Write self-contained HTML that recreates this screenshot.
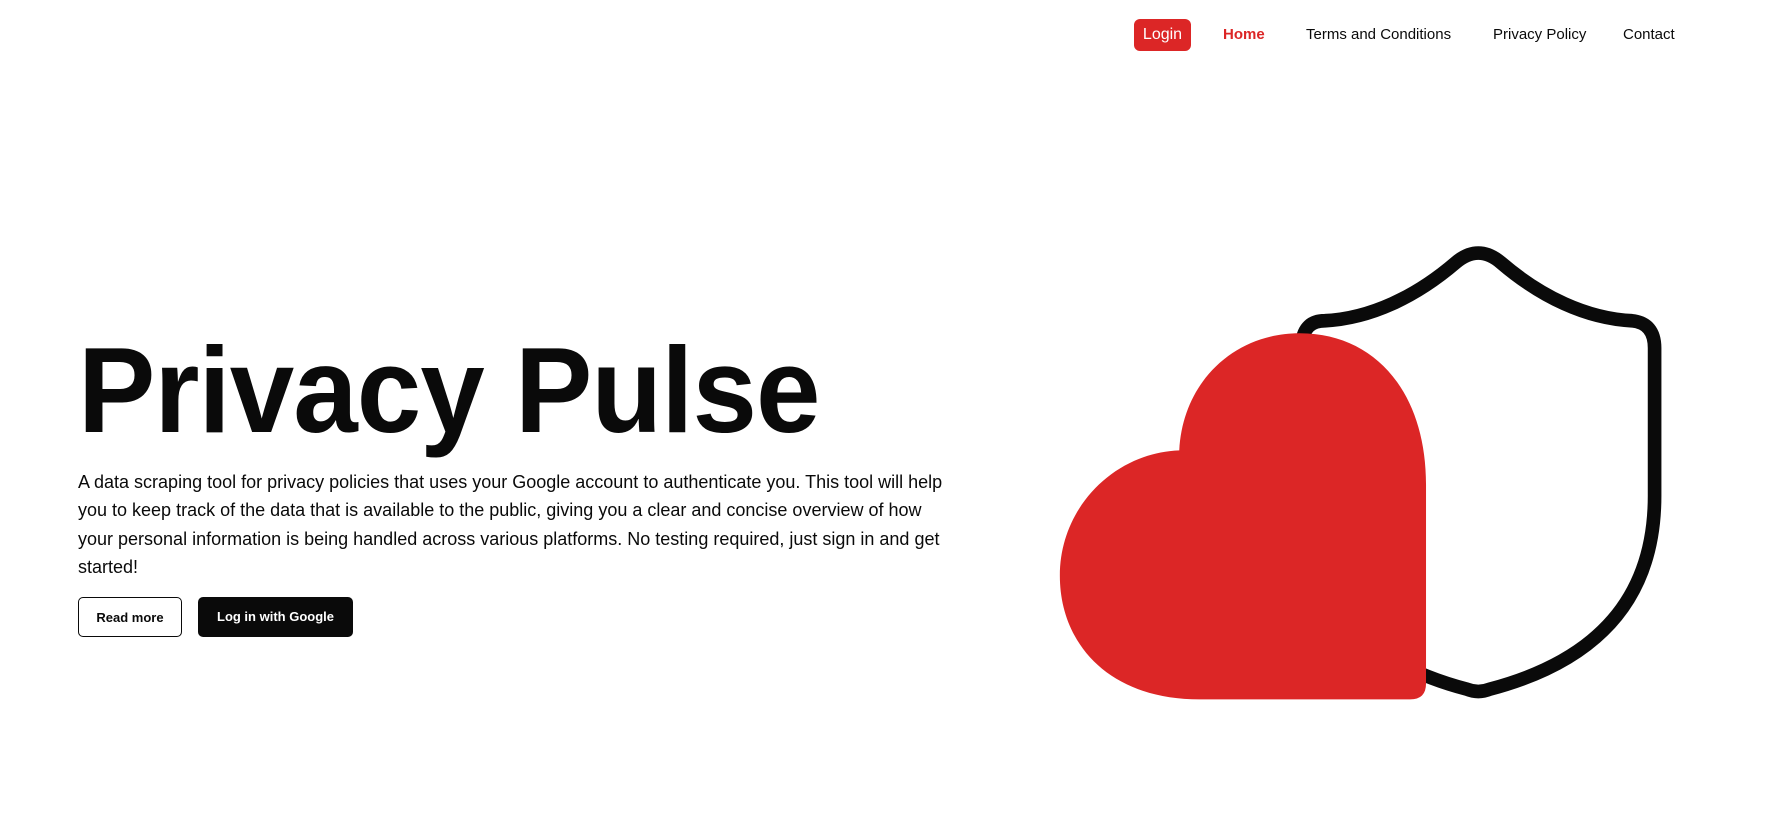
<!DOCTYPE html>
<html><head><meta charset="utf-8"><style>
body{margin:0;width:1774px;height:828px;background:#fff;position:relative;overflow:hidden;font-family:"Liberation Sans",sans-serif;color:#0a0a0a}
.nav{position:absolute;top:19px;font-size:15px;line-height:32px}
.login{position:absolute;left:1134px;top:19px;width:57px;height:32px;background:#dc2626;color:#fff;border-radius:6px;text-align:center;line-height:32px;font-size:16px}
h1{position:absolute;left:78px;top:320px;margin:0;font-size:122px;font-weight:bold;letter-spacing:-1px;line-height:140px;white-space:nowrap;transform:scaleX(0.95);transform-origin:0 0}
p{position:absolute;left:78px;top:468px;margin:0;font-size:18px;line-height:28.4px;white-space:nowrap}
.btn{position:absolute;top:597px;height:40px;border-radius:5px;font-size:13px;font-weight:bold;line-height:40px;text-align:center;box-sizing:border-box}
svg{position:absolute;left:0;top:0}
</style></head><body>
<div class="login">Login</div>
<div class="nav" style="left:1223px;color:#dc2626;font-weight:bold">Home</div>
<div class="nav" style="left:1306px">Terms and Conditions</div>
<div class="nav" style="left:1493px">Privacy Policy</div>
<div class="nav" style="left:1623px">Contact</div>
<h1>Privacy Pulse</h1>
<p>A data scraping tool for privacy policies that uses your Google account to authenticate you. This tool will help<br>you to keep track of the data that is available to the public, giving you a clear and concise overview of how<br>your personal information is being handled across various platforms. No testing required, just sign in and get<br>started!</p>
<div class="btn" style="left:78px;width:104px;border:1px solid #0a0a0a">Read more</div>
<div class="btn" style="left:198px;width:155px;background:#0a0a0a;color:#fff">Log in with Google</div>
<svg width="1774" height="828" viewBox="0 0 1560 728">
<g transform="translate(-5,-4)">
<path d="M1170,286 C1210,284 1250,265 1285,235 Q1305,218 1325,235 C1360,265 1400,284 1440,286 Q1460,288 1460,310 L1460,440 C1460,530 1410,585 1315,610 Q1305,614 1295,610 C1200,585 1150,530 1150,440 L1150,305 Q1152,286 1170,286 Z" fill="none" stroke="#0a0a0a" stroke-width="12" stroke-linejoin="round"/>
<path d="M1060,619 C980,619 937,570 937,510 C937,450 985,402 1042,400 C1045,340 1090,297 1148,297 C1215,297 1259,350 1259,430 L1259,605 Q1259,619 1245,619 Z" fill="#dc2626"/>
</g>
</svg>
</body></html>
